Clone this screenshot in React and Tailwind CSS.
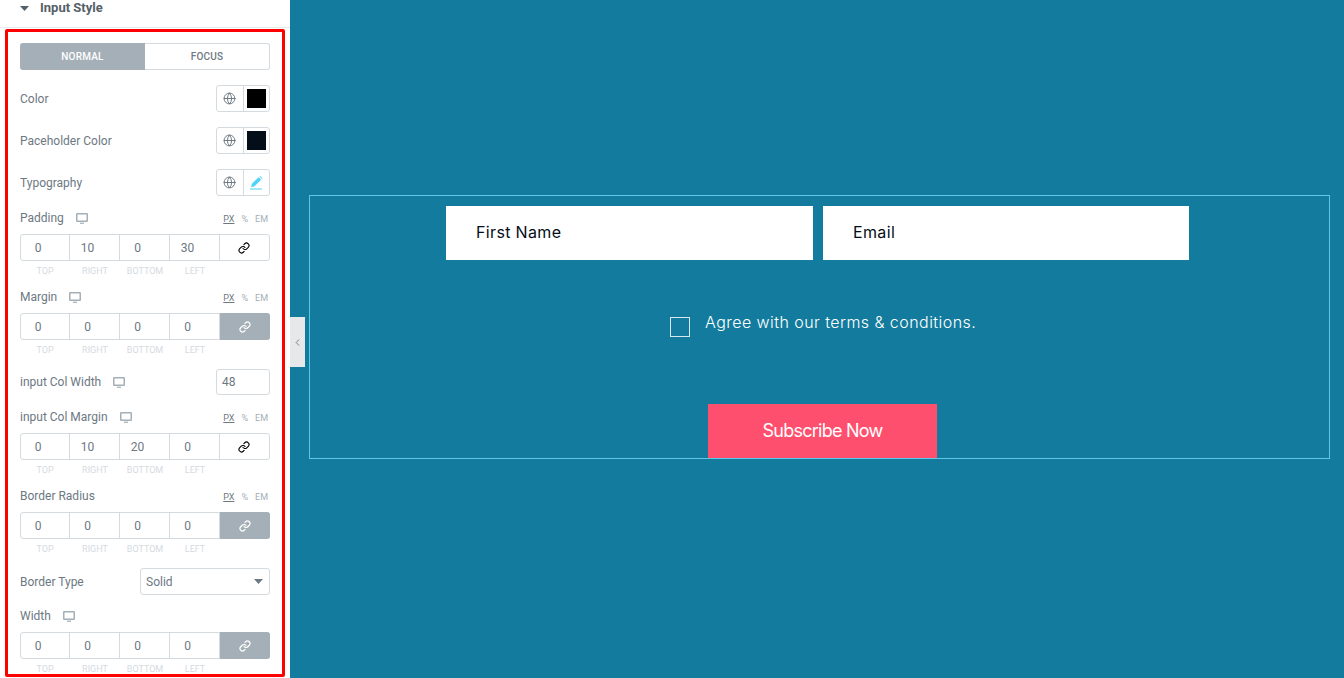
import React from 'react';
import { ChevronLeft, Globe, Link as LinkIcon } from 'lucide-react';

const CAPTIONS = ['TOP', 'RIGHT', 'BOTTOM', 'LEFT'];

function DesktopIcon({ className }) {
  return (
    <svg className={className} width="12" height="11" viewBox="0 0 12 11" fill="none">
      <rect x="0.75" y="0.75" width="10.5" height="7.5" rx="0.5" stroke="#a4afb7" strokeWidth="1.5" />
      <path d="M4 10.25h4" stroke="#a4afb7" strokeWidth="1.2" />
    </svg>
  );
}

function Units() {
  return (
    <div className="ml-auto flex gap-[7px] pr-[2px] pt-[2px] text-[9px] leading-[14px] text-[#a4afb7]">
      <span className="text-[#6d7882] underline">PX</span>
      <span>%</span>
      <span>EM</span>
    </div>
  );
}

function Dimensions({ label, values, linked, mt, icon = true, units = true }) {
  return (
    <div style={{ marginTop: mt }}>
      <div className="flex h-[14px] items-center text-xs text-[#6d7882]">
        <span>{label}</span>
        {icon && <DesktopIcon className="ml-[12px]" />}
        {units && <Units />}
      </div>
      <div className="mt-[9px] flex h-[27px] w-[250px] rounded-[3px] border border-[#d5dadf]">
        {values.map((v, i) => (
          <div
            key={i}
            className={`flex items-center justify-center border-r border-[#d5dadf] pr-[14px] text-xs text-[#6d7882] ${i === 0 ? 'w-[49px]' : 'w-[50px]'}`}
          >
            {v}
          </div>
        ))}
        {linked ? (
          <div className="-my-px -mr-px flex flex-1 items-center justify-center rounded-r-[3px] bg-[#a4afb7] pr-px text-white">
            <LinkIcon size={12} strokeWidth={2.4} />
          </div>
        ) : (
          <div className="flex flex-1 items-center justify-center pr-px text-black">
            <LinkIcon size={12} strokeWidth={2.2} />
          </div>
        )}
      </div>
      <div className="mt-[4px] flex h-[12px] w-[200px] text-[9px] leading-[12px] text-[#d5dadf]">
        {CAPTIONS.map(c => (
          <span key={c} className="w-[50px] text-center">{c}</span>
        ))}
      </div>
    </div>
  );
}

function ControlRow({ label, mt, children }) {
  return (
    <div className="flex h-[27px] items-center text-xs text-[#6d7882]" style={{ marginTop: mt }}>
      <span>{label}</span>
      <div className="ml-auto flex h-[27px] w-[54px] rounded-[3px] border border-[#d5dadf]">
        <div className="flex w-[27px] items-center justify-center border-r border-[#d5dadf] pr-px text-[#6d7882]">
          <Globe size={13} strokeWidth={1.8} />
        </div>
        <div className="flex flex-1 items-center justify-center">{children}</div>
      </div>
    </div>
  );
}

export default function App() {
  return (
    <div className="relative flex h-[678px] w-[1344px] overflow-hidden bg-white font-['Roboto',sans-serif]">
      {/* editor panel */}
      <div className="h-[678px] w-[290px] shrink-0 bg-white">
        <div className="flex h-[28px] items-start border-b border-[#e6e9ec] pl-[20px] pt-[1px] text-xs font-bold text-[#556068]">
          <svg className="mt-[5px]" width="9" height="5" viewBox="0 0 9 5"><path d="M0 0h9L4.5 5z" fill="#556068" /></svg>
          <span className="ml-[11px] text-[13px] leading-[14px]">Input Style</span>
        </div>

        <div className="ml-[5px] mt-px h-[648px] w-[280px] rounded-[2px] border-[3px] border-[#ff0000] px-[12px] pt-[11px]">
          <div className="flex h-[27px] w-[250px] text-[10px] font-medium tracking-[0.2px]">
            <div className="flex w-[125px] items-center justify-center rounded-l-[3px] bg-[#a4afb7] text-white">NORMAL</div>
            <div className="flex flex-1 items-center justify-center rounded-r-[3px] border border-l-0 border-[#d5dadf] text-[#6d7882]">FOCUS</div>
          </div>

          <ControlRow label="Color" mt={15}>
            <div className="h-[19px] w-[19px] bg-black" />
          </ControlRow>
          <ControlRow label="Paceholder Color" mt={15}>
            <div className="h-[19px] w-[19px] bg-[#040e18]" />
          </ControlRow>
          <ControlRow label="Typography" mt={15}>
            <svg width="13" height="14" viewBox="0 0 13 14">
              <path d="M8.6 1.2l2.6 2.5-6.7 6.6-3.4.9.8-3.4zM9.5.4l.6-.4 2.5 2.4-.7.7z" fill="#4fd2f7" />
              <path d="M0 13h12" stroke="#4fd2f7" strokeWidth="1" />
            </svg>
          </ControlRow>

          <Dimensions label="Padding" values={[0, 10, 0, 30]} mt={15} />
          <Dimensions label="Margin" values={[0, 0, 0, 0]} linked mt={13} />

          <div className="mt-[13px] flex h-[26px] items-center text-xs text-[#6d7882]">
            <span>input Col Width</span>
            <DesktopIcon className="ml-[12px]" />
            <div className="ml-auto flex h-[26px] w-[54px] items-center rounded-[3px] border border-[#d5dadf] pl-[5px]">48</div>
          </div>

          <Dimensions label="input Col Margin" values={[0, 10, 20, 0]} mt={15} />
          <Dimensions label="Border Radius" values={[0, 0, 0, 0]} linked mt={13} icon={false} />

          <div className="mt-[13px] flex h-[27px] items-center text-xs text-[#6d7882]">
            <span>Border Type</span>
            <div className="ml-auto flex h-[27px] w-[130px] items-center justify-between rounded-[3px] border border-[#d5dadf] pl-[5px] pr-[6px]">
              <span>Solid</span>
              <svg width="9" height="5" viewBox="0 0 9 5"><path d="M0 0h9L4.5 5z" fill="#6d7882" /></svg>
            </div>
          </div>

          <Dimensions label="Width" values={[0, 0, 0, 0]} linked mt={14} units={false} />
        </div>
      </div>

      {/* collapse handle */}
      <div className="absolute left-[290px] top-[317px] flex h-[50px] w-[15px] items-center justify-center bg-[#e6e8ea] text-[#6d7882]">
        <ChevronLeft size={11} strokeWidth={2} />
      </div>

      {/* preview */}
      <div className="flex-1 bg-[#137b9d] pl-[19px] pr-[14px] pt-[195px] font-['Inter',sans-serif]">
        <div className="h-[264px] border border-[#5bc8e8] pt-[10px]">
          <div className="ml-[136px] flex gap-[10px]">
            <div className="flex h-[54px] w-[367px] items-center bg-white pb-[2px] pl-[30px] text-base tracking-[0.35px] text-[#040e18]">First Name</div>
            <div className="flex h-[54px] w-[366px] items-center bg-white pb-[2px] pl-[30px] text-base tracking-[0.35px] text-[#040e18]">Email</div>
          </div>
          <div className="ml-[360px] mt-[52px] flex h-[25px] items-start">
            <div className="mt-[5px] h-[20px] w-[20px] border border-[#d9e8ee]" />
            <span className="ml-[15px] text-base font-light leading-[20px] tracking-[0.45px] text-white">Agree with our terms &amp; conditions.</span>
          </div>
          <div className="ml-[398px] mt-[67px] flex h-[54px] w-[229px] items-center justify-center bg-[#ff4f6e] text-lg tracking-[-0.75px] text-white">
            Subscribe Now
          </div>
        </div>
      </div>
    </div>
  );
}
